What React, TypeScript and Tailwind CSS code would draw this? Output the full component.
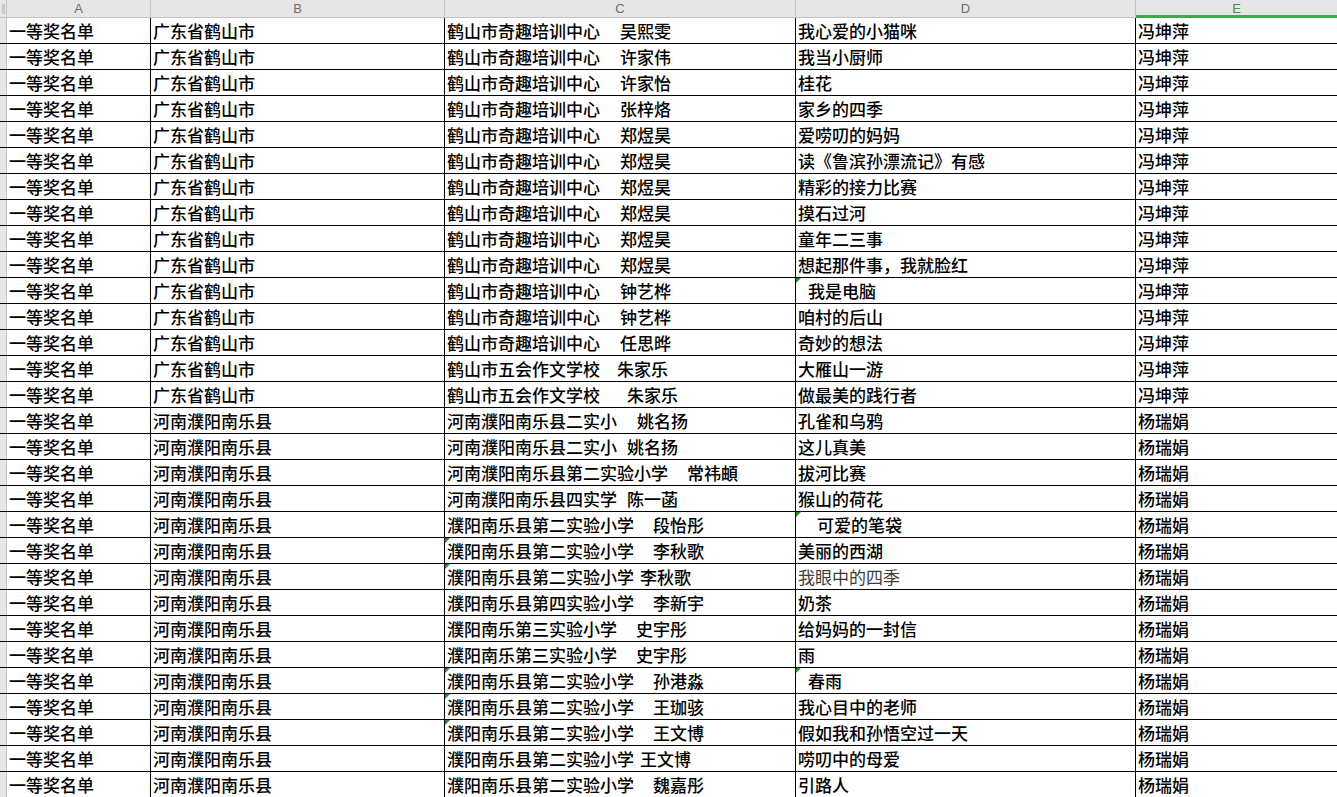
import React from 'react';

type Row = {
  b: string;
  school: string;
  name: string;
  gap: number;
  title: string;
  e: string;
  cMark?: boolean;
  dMark?: boolean;
  dIndent?: number;
  dGray?: boolean;
};

const GD = '广东省鹤山市';
const HN = '河南濮阳南乐县';
const QQ = '鹤山市奇趣培训中心';
const WH = '鹤山市五会作文学校';
const S2 = '濮阳南乐县第二实验小学';

const rows: Row[] = [
  { b: GD, school: QQ, name: '吴熙雯', gap: 20, title: '我心爱的小猫咪', e: '冯坤萍' },
  { b: GD, school: QQ, name: '许家伟', gap: 20, title: '我当小厨师', e: '冯坤萍' },
  { b: GD, school: QQ, name: '许家怡', gap: 20, title: '桂花', e: '冯坤萍' },
  { b: GD, school: QQ, name: '张梓烙', gap: 20, title: '家乡的四季', e: '冯坤萍' },
  { b: GD, school: QQ, name: '郑煜昊', gap: 20, title: '爱唠叨的妈妈', e: '冯坤萍' },
  { b: GD, school: QQ, name: '郑煜昊', gap: 20, title: '读《鲁滨孙漂流记》有感', e: '冯坤萍' },
  { b: GD, school: QQ, name: '郑煜昊', gap: 20, title: '精彩的接力比赛', e: '冯坤萍' },
  { b: GD, school: QQ, name: '郑煜昊', gap: 20, title: '摸石过河', e: '冯坤萍' },
  { b: GD, school: QQ, name: '郑煜昊', gap: 20, title: '童年二三事', e: '冯坤萍' },
  { b: GD, school: QQ, name: '郑煜昊', gap: 20, title: '想起那件事，我就脸红', e: '冯坤萍' },
  { b: GD, school: QQ, name: '钟艺桦', gap: 20, title: '我是电脑', e: '冯坤萍', dMark: true, dIndent: 10 },
  { b: GD, school: QQ, name: '钟艺桦', gap: 20, title: '咱村的后山', e: '冯坤萍' },
  { b: GD, school: QQ, name: '任思晔', gap: 20, title: '奇妙的想法', e: '冯坤萍' },
  { b: GD, school: WH, name: '朱家乐', gap: 17, title: '大雁山一游', e: '冯坤萍' },
  { b: GD, school: WH, name: '朱家乐', gap: 27, title: '做最美的践行者', e: '冯坤萍' },
  { b: HN, school: '河南濮阳南乐县二实小', name: '姚名扬', gap: 20, title: '孔雀和乌鸦', e: '杨瑞娟' },
  { b: HN, school: '河南濮阳南乐县二实小', name: '姚名扬', gap: 10, title: '这儿真美', e: '杨瑞娟' },
  { b: HN, school: '河南濮阳南乐县第二实验小学', name: '常祎頔', gap: 19, title: '拔河比赛', e: '杨瑞娟' },
  { b: HN, school: '河南濮阳南乐县四实学', name: '陈一菡', gap: 10, title: '猴山的荷花', e: '杨瑞娟' },
  { b: HN, school: S2, name: '段怡彤', gap: 19, title: '可爱的笔袋', e: '杨瑞娟', dMark: true, dIndent: 19 },
  { b: HN, school: S2, name: '李秋歌', gap: 19, title: '美丽的西湖', e: '杨瑞娟', cMark: true },
  { b: HN, school: S2, name: '李秋歌', gap: 6, title: '我眼中的四季', e: '杨瑞娟', cMark: true, dGray: true },
  { b: HN, school: '濮阳南乐县第四实验小学', name: '李新宇', gap: 19, title: '奶茶', e: '杨瑞娟' },
  { b: HN, school: '濮阳南乐第三实验小学', name: '史宇彤', gap: 19, title: '给妈妈的一封信', e: '杨瑞娟' },
  { b: HN, school: '濮阳南乐第三实验小学', name: '史宇彤', gap: 19, title: '雨', e: '杨瑞娟' },
  { b: HN, school: S2, name: '孙港淼', gap: 19, title: '春雨', e: '杨瑞娟', cMark: true, dMark: true, dIndent: 10 },
  { b: HN, school: S2, name: '王珈骇', gap: 19, title: '我心目中的老师', e: '杨瑞娟', cMark: true },
  { b: HN, school: S2, name: '王文博', gap: 19, title: '假如我和孙悟空过一天', e: '杨瑞娟', cMark: true },
  { b: HN, school: S2, name: '王文博', gap: 6, title: '唠叨中的母爱', e: '杨瑞娟' },
  { b: HN, school: S2, name: '魏嘉彤', gap: 19, title: '引路人', e: '杨瑞娟' },
];

const Mark = () => (
  <span className="absolute left-0 top-0 w-0 h-0 border-t-[5px] border-t-[#1f8f2a] border-r-[5px] border-r-transparent" />
);

const cell = 'relative flex items-center border-r border-black pl-[2px] whitespace-pre overflow-hidden';

export default function App() {
  return (
    <div
      className="w-[1337px] h-[797px] overflow-hidden bg-white text-black"
      style={{ fontFamily: '"Noto Sans CJK SC", "Liberation Sans", sans-serif' }}
    >
      {/* column headers */}
      <div className="flex h-[18px] bg-[#e6e6e6] text-[13px] text-[#6e6e6e] font-['Liberation_Sans',sans-serif]">
        <div className="w-[7px] shrink-0 border-r border-b border-[#c4c4c4] flex items-center justify-center">
          <div className="w-[3px] h-[10px] bg-[#c8c8c8]" />
        </div>
        <div className="w-[144px] shrink-0 border-r border-b border-[#c4c4c4] flex items-center justify-center">A</div>
        <div className="w-[294px] shrink-0 border-r border-b border-[#c4c4c4] flex items-center justify-center">B</div>
        <div className="w-[351px] shrink-0 border-r border-b border-[#c4c4c4] flex items-center justify-center">C</div>
        <div className="w-[340px] shrink-0 border-r border-b border-[#c4c4c4] flex items-center justify-center">D</div>
        <div className="flex-1 border-b-[3px] border-[#3fa84a] text-[#3a9a45] flex items-center justify-center pt-[2px]">E</div>
      </div>

      {rows.map((r, i) => (
        <div key={i} className="flex h-[26px] border-b border-black text-[17px] leading-none font-medium">
          <div className="w-[7px] shrink-0 bg-[#e6e6e6] border-r border-[#c4c4c4]" />
          <div className={`w-[144px] shrink-0 ${cell}`}>一等奖名单</div>
          <div className={`w-[294px] shrink-0 ${cell}`}>{r.b}</div>
          <div className={`w-[351px] shrink-0 ${cell}`}>
            {r.cMark && <Mark />}
            <span>{r.school}</span>
            <span style={{ marginLeft: r.gap }}>{r.name}</span>
          </div>
          <div className={`w-[340px] shrink-0 ${cell} ${r.dGray ? 'text-[#3c3c3c] font-normal' : ''}`}>
            {r.dMark && <Mark />}
            <span style={{ marginLeft: r.dIndent ?? 0 }}>{r.title}</span>
          </div>
          <div className="flex-1 flex items-center pl-[2px]">{r.e}</div>
        </div>
      ))}
    </div>
  );
}
